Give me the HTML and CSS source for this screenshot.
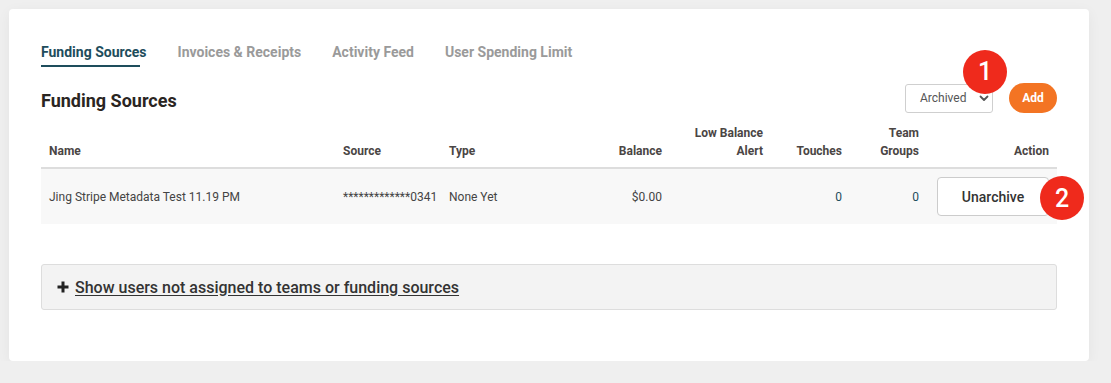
FILE: index.html
```html
<!DOCTYPE html>
<html>
<head>
<meta charset="utf-8">
<link rel="stylesheet" href="styles.css">
</head>
<body>
<div class="card">
  <nav class="tabs">
    <a class="tab active">Funding Sources</a>
    <a class="tab">Invoices &amp; Receipts</a>
    <a class="tab">Activity Feed</a>
    <a class="tab">User Spending Limit</a>
  </nav>
  <div class="title-row">
    <h2 class="title">Funding Sources</h2>
    <div class="controls">
      <div class="select-wrap">
        <div class="select">
          <span>Archived</span>
          <svg class="chev" width="10" height="7" viewBox="0 0 10 7"><path d="M1.5 1.5 L5 5 L8.5 1.5" fill="none" stroke="#555" stroke-width="1.8" stroke-linecap="round" stroke-linejoin="round"/></svg>
        </div>
        <span class="badge b1">1</span>
      </div>
      <button class="add">Add</button>
    </div>
  </div>
  <table class="grid">
    <colgroup>
      <col style="width:294px"><col style="width:106px"><col style="width:119px"><col style="width:110px"><col style="width:101px"><col style="width:79px"><col style="width:77px"><col style="width:130px">
    </colgroup>
    <thead>
      <tr>
        <th>Name</th>
        <th>Source</th>
        <th>Type</th>
        <th class="r">Balance</th>
        <th class="r">Low Balance<br>Alert</th>
        <th class="r">Touches</th>
        <th class="r">Team<br>Groups</th>
        <th class="r">Action</th>
      </tr>
    </thead>
    <tbody>
      <tr>
        <td>Jing Stripe Metadata Test 11.19 PM</td>
        <td>*************0341</td>
        <td>None Yet</td>
        <td class="r">$0.00</td>
        <td class="r"></td>
        <td class="r num">0</td>
        <td class="r num">0</td>
        <td class="r">
          <div class="btn-wrap">
            <button class="unarchive">Unarchive</button>
            <span class="badge b2">2</span>
          </div>
        </td>
      </tr>
    </tbody>
  </table>
  <div class="collapse">
    <svg class="plus" width="12" height="12" viewBox="0 0 12 12"><path d="M6 0.5 V11.5 M0.5 6 H11.5" stroke="#222" stroke-width="3"/></svg>
    <a class="show-link">Show users not assigned to teams or funding sources</a>
  </div>
</div>
</body>
</html>
```
FILE: styles.css
```css
html, body {
  margin: 0;
  padding: 0;
  background: #efefef;
  font-family: Roboto, "Liberation Sans", Arial, sans-serif;
  color: #333;
}

.card {
  margin: 9px 0 0 9px;
  width: 1080px;
  box-sizing: border-box;
  background: #fff;
  border-radius: 4px;
  box-shadow: 0 3px 14px rgba(0, 0, 0, 0.05);
  padding: 35px 32px 51px 32px;
}

.tabs {
  display: flex;
  gap: 31px;
}

.tab {
  position: relative;
  font-size: 14px;
  font-weight: 700;
  line-height: 16px;
  color: #9a9a9a;
  padding-bottom: 5px;
}

.tab.active {
  color: #1e4d5c;
}

.tab.active::after {
  content: "";
  position: absolute;
  left: 0;
  bottom: -2px;
  width: calc(100% - 7px);
  height: 2px;
  background: #1e4d5c;
}

.title-row {
  display: flex;
  align-items: center;
  justify-content: space-between;
  margin-top: 18px;
}

.title {
  margin: 4px 0 0 0;
  font-size: 18px;
  font-weight: 700;
  color: #2a2522;
}

.controls {
  display: flex;
  align-items: center;
  gap: 16px;
}

.select-wrap {
  position: relative;
}

.select {
  width: 88px;
  height: 29px;
  box-sizing: border-box;
  border: 1px solid #cfcfcf;
  border-radius: 3px;
  display: flex;
  align-items: center;
  justify-content: space-between;
  padding: 0 3px 0 14px;
  font-size: 12px;
  color: #555;
}

.chev {
  display: block;
}

.add {
  width: 48px;
  height: 30px;
  border: none;
  border-radius: 15px;
  background: #f37423;
  color: #fff;
  font-family: inherit;
  font-size: 12px;
  font-weight: 700;
  padding: 0;
}

.badge {
  position: absolute;
  width: 44px;
  height: 44px;
  border-radius: 50%;
  background: #ef2a1c;
  color: #fff;
  font-size: 25px;
  font-weight: 500;
  display: flex;
  align-items: center;
  justify-content: center;
  line-height: 1;
}

.b1 {
  left: 58px;
  top: -34px;
}

.b2 {
  left: 105px;
  top: -1px;
}

.grid {
  width: 1016px;
  margin-top: 11px;
  border-collapse: collapse;
  table-layout: fixed;
}

.grid th {
  font-size: 12px;
  font-weight: 700;
  line-height: 18px;
  color: #4a4544;
  text-align: left;
  vertical-align: bottom;
  padding: 0 8px 7px 8px;
  border-bottom: 2px solid #dddddd;
}

.grid td {
  height: 56px;
  box-sizing: border-box;
  background: #f8f8f8;
  font-size: 12px;
  color: #444;
  padding: 0 8px;
  vertical-align: middle;
  white-space: nowrap;
}

.grid .r {
  text-align: right;
}

.grid td.num {
  color: #1e4d5c;
}

.btn-wrap {
  position: relative;
  display: flex;
  justify-content: flex-end;
}

.unarchive {
  width: 112px;
  height: 39px;
  background: #fff;
  border: 1px solid #cccccc;
  border-radius: 4px;
  font-family: inherit;
  font-size: 14px;
  font-weight: 500;
  color: #333;
  padding: 0;
}

.collapse {
  margin-top: 40px;
  height: 46px;
  box-sizing: border-box;
  background: #f3f3f3;
  border: 1px solid #dddddd;
  border-radius: 3px;
  display: flex;
  align-items: center;
  padding-left: 15px;
  gap: 6px;
}

.plus {
  display: block;
}

.show-link {
  font-size: 16px;
  font-weight: 500;
  color: #333;
  text-decoration: underline;
  text-underline-offset: 2px;
}
```
